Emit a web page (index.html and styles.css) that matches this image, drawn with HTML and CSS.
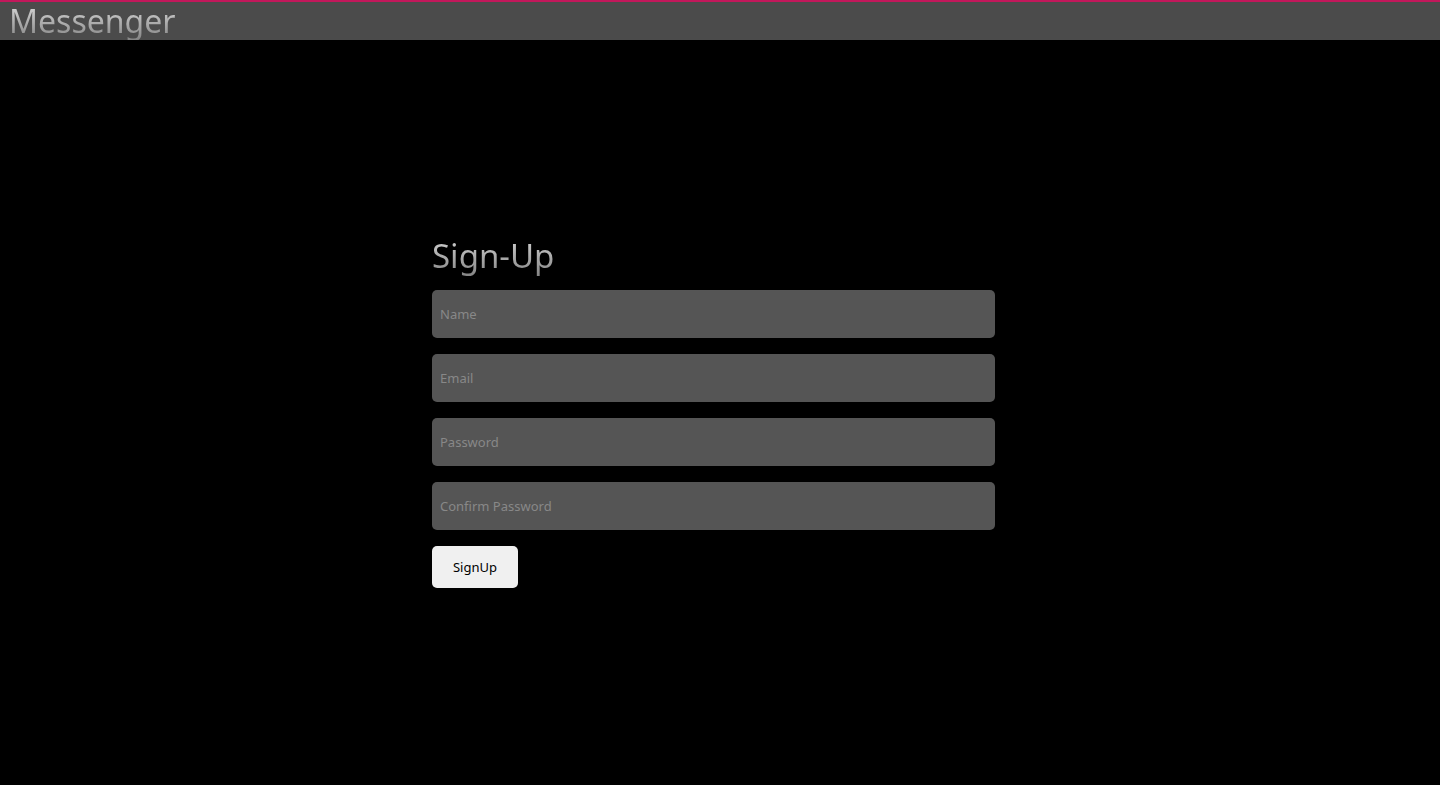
FILE: index.html
```html
<!DOCTYPE html>
<html lang="en">
<head>
<meta charset="utf-8">
<title>Messenger</title>
<link rel="stylesheet" href="styles.css">
</head>
<body>
<header class="topbar">
  <h1 class="brand">Messenger</h1>
</header>
<main class="stage">
  <form class="signup">
    <h2 class="signup-title">Sign-Up</h2>
    <input class="field" type="text" placeholder="Name">
    <input class="field" type="email" placeholder="Email">
    <input class="field" type="password" placeholder="Password">
    <input class="field" type="password" placeholder="Confirm Password">
    <button class="submit" type="button">SignUp</button>
  </form>
</main>
</body>
</html>
```
FILE: styles.css
```css
* { box-sizing: border-box; }

html, body {
  margin: 0;
  height: 100%;
  background: #000;
  font-family: "Noto Sans", "Open Sans", sans-serif;
}

body {
  display: flex;
  flex-direction: column;
}

.topbar {
  height: 40px;
  background: #4b4b4b;
  border-top: 2px solid #c2185b;
  display: flex;
  align-items: center;
  padding-left: 9px;
}

.brand {
  margin: 0;
  font-size: 32px;
  font-weight: 400;
  line-height: 38px;
  background: linear-gradient(#dcdcdc, #858585);
  -webkit-background-clip: text;
  background-clip: text;
  color: transparent;
}

.stage {
  flex: 1;
  display: flex;
  align-items: center;
  padding-left: 432px;
}

.signup {
  width: 563px;
  display: flex;
  flex-direction: column;
  gap: 16px;
}

/* taller line box keeps the gradient under the descender of "g" */
.signup-title {
  margin: -2px 0;
  font-size: 33px;
  font-weight: 400;
  line-height: 40px;
  background: linear-gradient(#d4d4d4, #858585);
  -webkit-background-clip: text;
  background-clip: text;
  color: transparent;
}

.field {
  height: 48px;
  border: none;
  border-radius: 5px;
  background: #555;
  padding: 0 8px;
  font-family: inherit;
  font-size: 13px;
  color: #ddd;
  outline: none;
}

.field::placeholder {
  color: #888;
}

.submit {
  align-self: flex-start;
  width: 86px;
  height: 42px;
  border: none;
  border-radius: 5px;
  background: #f0f0f0;
  color: #000;
  font-family: inherit;
  font-size: 13px;
  cursor: pointer;
}
```
